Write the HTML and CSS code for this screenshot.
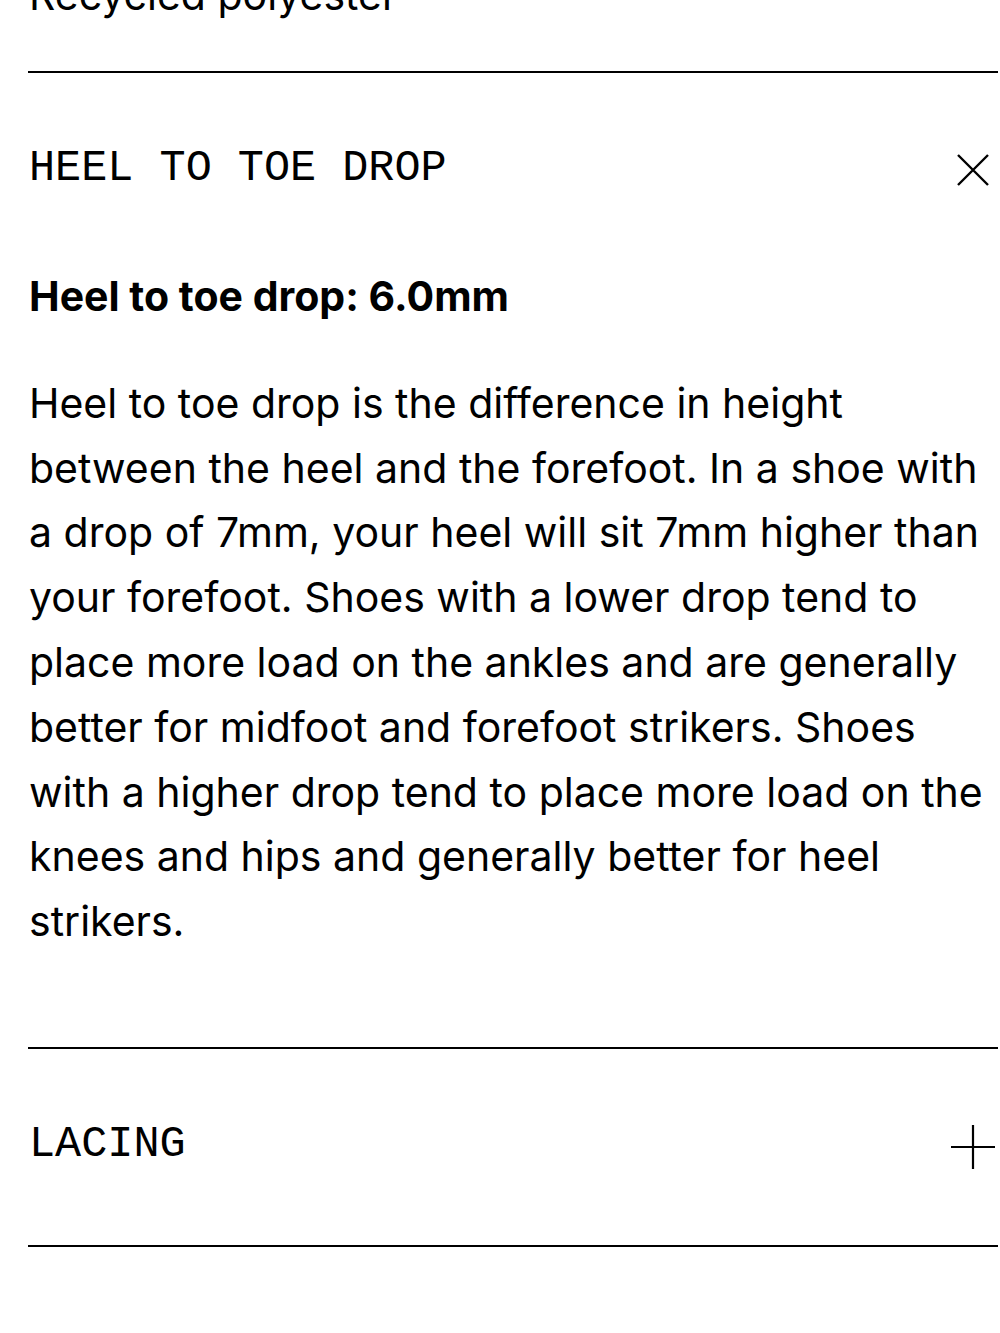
FILE: index.html
```html
<!DOCTYPE html>
<html lang="en">
<head>
  <meta charset="UTF-8">
  <meta name="viewport" content="width=device-width, initial-scale=1.0">
  <title>Product details</title>
  <link rel="stylesheet" href="styles.css">
</head>
<body>
  <div class="details">
    <!-- tail of the materials panel, scrolled mostly out of view -->
    <div class="panel panel-prev">
      <p class="panel-text">Recycled polyester</p>
    </div>

    <div class="panel open">
      <button class="panel-head" type="button">
        <span class="panel-title">HEEL TO TOE DROP</span>
        <svg class="icon icon-close" width="32" height="32" viewBox="0 0 32 32">
          <path d="M1 1 L31 31 M31 1 L1 31" stroke="#000" stroke-width="2.4" fill="none"/>
        </svg>
      </button>
      <div class="panel-body">
        <h3 class="panel-sub">Heel to toe drop: 6.0mm</h3>
        <p class="panel-text">Heel to toe drop is the difference in height between the heel and the forefoot. In a shoe with a drop of 7mm, your heel will sit 7mm higher than your forefoot. Shoes with a lower drop tend to place more load on the ankles and are generally better for midfoot and forefoot strikers. Shoes with a higher drop tend to place more load on the knees and hips and generally better for heel strikers.</p>
      </div>
    </div>

    <div class="panel">
      <button class="panel-head" type="button">
        <span class="panel-title">LACING</span>
        <svg class="icon icon-plus" width="44" height="44" viewBox="0 0 44 44">
          <path d="M0 22 H44 M22 0 V44" stroke="#000" stroke-width="2.2" fill="none"/>
        </svg>
      </button>
    </div>
  </div>
</body>
</html>
```

FILE: styles.css
```css
body {
  margin: 0;
  background-color: #fff;
  color: #000;
  font-family: Inter, "Open Sans", sans-serif;
  overflow: hidden;
}
.details {
  padding: 0 2px 0 28px;
}
.panel {
  border-bottom: 2px solid #000;
}
.panel-prev {
  margin-top: -37px;
  padding-bottom: 43px;
}
.panel-text {
  margin: 0;
  font-size: 41px;
  line-height: 64.8px;
  padding-left: 1px;
}
.panel-head {
  display: flex;
  align-items: center;
  justify-content: space-between;
  width: 100%;
  height: 196px;
  padding: 0 9px 4px 0;
  border: none;
  background: none;
  color: inherit;
  font: inherit;
  cursor: pointer;
  text-align: left;
}
.panel-title {
  font-family: "Liberation Mono", monospace;
  font-size: 43.5px;
  padding-left: 1px;
}
.icon-close {
  margin-top: 2px;
}
.icon-plus {
  margin-right: -6px;
  margin-top: 4px;
}
.panel-body {
  padding: 2px 0 93px;
}
.panel-sub {
  margin: 0 0 50px;
  font-size: 41px;
  line-height: 50px;
  font-weight: 700;
  padding-left: 1px;
}
```
